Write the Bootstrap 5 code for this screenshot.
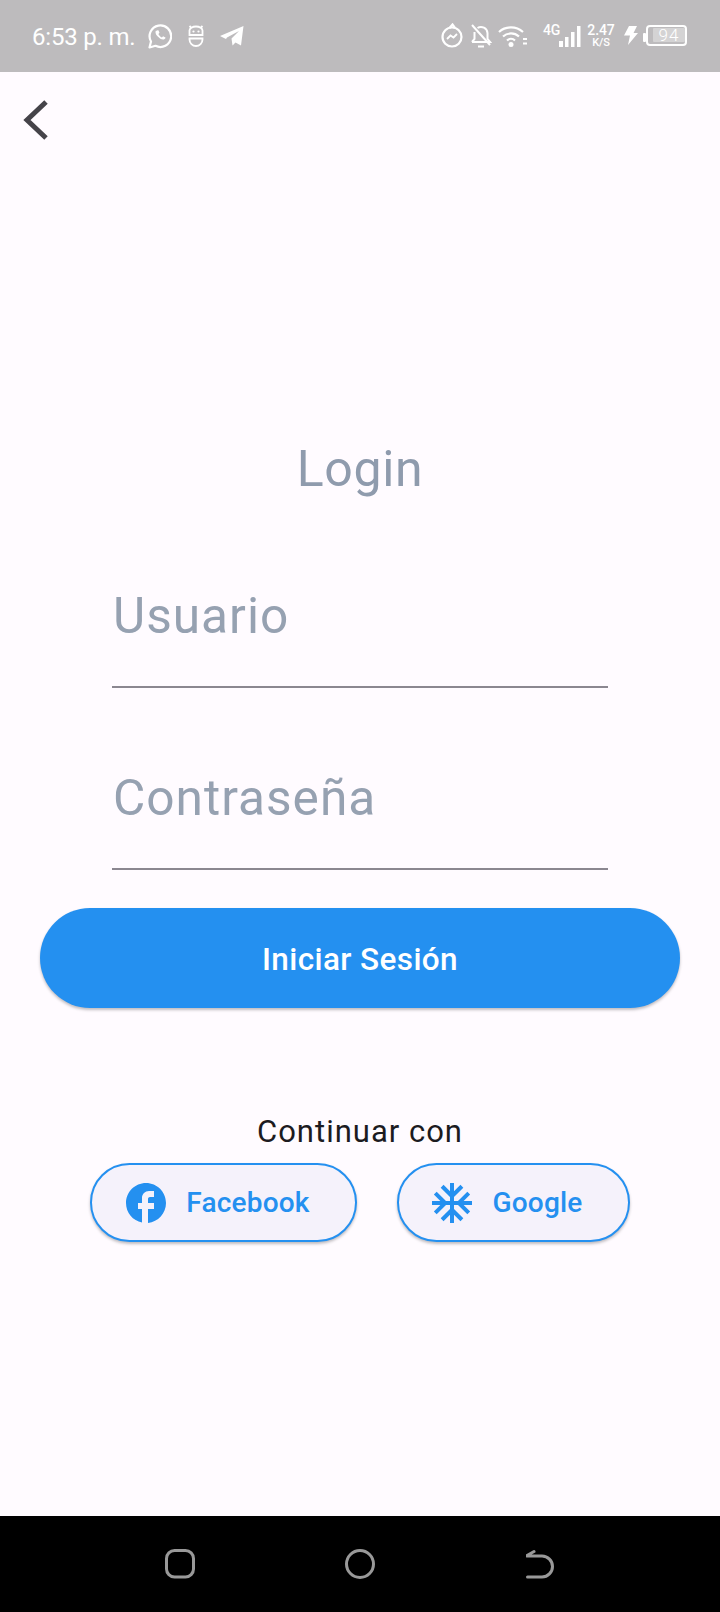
<!DOCTYPE html>
<html lang="es"><head><meta charset="utf-8"><title>Login</title>
<link href="https://cdn.jsdelivr.net/npm/bootstrap@5.3.0/dist/css/bootstrap.min.css" rel="stylesheet">
<style>
html,body{height:1612px;margin:0;overflow:hidden}
body{background:#fffbff;font-family:Roboto,sans-serif;display:flex;flex-direction:column}
.sbar{height:72px;background:#bdbbbd;color:#fff;padding:0 0 0 32px;flex:none}
.sbar svg{display:block;flex:none}
.stime{font-size:24px;line-height:28px;width:116px;white-space:nowrap;letter-spacing:-.2px;padding-top:1px}
.net{font-size:14px;font-weight:500;line-height:14px;letter-spacing:-.3px;width:16px;margin:-13px 0 0 16px;white-space:nowrap}
.speed{font-weight:500;font-size:14px;line-height:14px;text-align:center;letter-spacing:-.1px;width:28px;margin:-2px 0 0 6px}
.speed span{display:block;font-size:11px;line-height:11px}
.batt{width:41px;height:21px;border:2px solid #fff;border-radius:4px;font-size:17px;font-weight:300;line-height:14px;text-align:center;padding:1px 0 1px 5px;margin-top:-1px}
.batt span{display:block;background:#d4d3d4;border-radius:1px;letter-spacing:1px;color:#fff}
.appbar{height:96px;flex:none;padding:27px 0 0 21px}
.mainarea{flex:1 1 auto;display:flex;flex-direction:column;align-items:center;min-height:0}
.ttl{font-size:50px;line-height:56px;margin:273px 0 0;color:#8f9bad;letter-spacing:.6px;font-weight:400}
.fld{width:496px;border-bottom:2px solid #8b8790;color:#96a1b1;font-size:49.600px;line-height:56px;letter-spacing:1px;padding-left:1px}
.fld1{margin-top:65px;height:126px;padding-top:26px}
.fld2{height:182px;padding-top:82px}
.mainbtn{width:640px;height:100px;margin-top:38px;padding-top:9px;border:0;border-radius:50px;background:#2490f0;color:#fff;font-size:31.500px;font-weight:500;letter-spacing:.4px;box-shadow:0 2px 3px rgba(0,0,0,.25)}
.cont{font-size:31px;line-height:36px;margin-top:106px;color:#1c1b1f;letter-spacing:1px}
.socials{gap:40px;margin-top:13px}
.sbtn{height:79px;border:2px solid #2490f0;border-radius:40px;background:#f5f2fb;color:#2490f0;font-size:28px;font-weight:500;box-shadow:0 2px 3px rgba(0,0,0,.25);gap:20px;letter-spacing:.2px}
.sfb{width:267px;padding:0 11px 0 0}
.sgo{width:233px;padding:0 12px 0 0}
.navb{height:96px;background:#000;flex:none;padding-left:165px}
.navb svg{display:block;flex:none}
</style></head>
<body>
<header class="sbar d-flex align-items-center">
  <div class="d-flex align-items-center">
    <span class="stime">6:53 p. m.</span>
    <svg width="24" height="26" viewBox="0 0 24 26" fill="none" stroke="#fff" stroke-width="2.200"><path d="M1.500 24.500l1.500-6A10.800 10.800 0 1 1 7.500 22.800z" stroke-linejoin="round"/><path d="M8 7.500c-1 1.500-.6 3.500 1.500 5.800S14 17 15.800 16.500c1.200-.4 2-1.500 1.600-2l-2.300-1.200-1.200 1.200c-1.300-.5-3-2.200-3.500-3.500l1.100-1.200-1-2.400c-.5-.4-1.800 0-2.500.6z" fill="#fff" stroke="none"/></svg>
    <svg width="18" height="22" viewBox="0 0 18 22" fill="none" stroke="#fff" stroke-width="1.800" style="margin-left:15px"><path d="M2.500 10V5.500a6.500 4 0 0 1 13 0V10zM2.500 1l2 2M15.500 1l-2 2M2.500 13.500h13v1a6.500 6.500 0 0 1-13 0z"/><circle cx="6.500" cy="6.500" r="1.100" fill="#fff" stroke="none"/><circle cx="11.500" cy="6.500" r="1.100" fill="#fff" stroke="none"/></svg>
    <svg width="24" height="20" viewBox="0 0 24 20" fill="#fff" style="margin-left:15px"><path d="M0 10 23.500 0 21 19.500l-5.500-3-3 3-1-7L19 5 7 11.500 6 13z"/></svg>
  </div>
  <div class="d-flex align-items-center ms-auto" style="margin-right:33px">
    <svg width="24" height="26" viewBox="0 0 24 26" fill="none" stroke="#fff" stroke-width="2.200"><circle cx="12" cy="14" r="9.500"/><path d="M9.500 5 12.500 1.500 15 5"/><path d="M7 16l3.500-3.500 3 2 3.500-3.500" stroke-width="1.800"/></svg>
    <svg width="22" height="24" viewBox="0 0 22 24" fill="none" stroke="#fff" stroke-width="2" style="margin-left:6px"><path d="M2 18h18l-2.500-3V9a6.500 6.500 0 0 0-10-5M4.500 8v7L2 18M8 22.500h6"/><path d="M2 1l18 20"/></svg>
    <svg width="28" height="24" viewBox="0 0 28 24" fill="none" stroke="#fff" stroke-width="2.200" style="margin-left:6px"><path d="M1 8a18 18 0 0 1 24 0M5 12.500a12 12 0 0 1 16 0M9 16.500a6 6 0 0 1 8 0"/><circle cx="13" cy="20.500" r="2.500" fill="#fff" stroke="none"/></svg>
    <svg width="4" height="7" viewBox="0 0 4 7" fill="#fff" style="margin:10px 0 0 -3px"><rect width="4" height="2"/><rect y="4.500" width="4" height="2"/></svg>
    <div class="net">4G</div>
    <svg width="22" height="21" viewBox="0 0 22 21" fill="#fff"><rect y="15" width="4" height="6"/><rect x="6" y="11" width="3.500" height="10"/><rect x="12" y="6" width="3.500" height="15"/><rect x="18" width="3.500" height="21"/></svg>
    <div class="speed">2.47<span>K/S</span></div>
    <svg width="14" height="19" viewBox="0 0 14 19" fill="#fff" style="margin:-2px 0 0 9px"><path d="M5 0h8L9.500 7H14L4 19l2-9.500H0z"/></svg>
    <svg width="3" height="9" viewBox="0 0 3 9" fill="#fff" style="margin:3px 0 0 5px"><rect width="3" height="9" rx="1"/></svg>
    <div class="batt"><span>94</span></div>
  </div>
</header>
<main class="mainarea">
  <div class="appbar align-self-start">
    <svg width="28" height="42" viewBox="0 0 28 42" fill="none" stroke="#454349" stroke-width="5"><path d="M25 3 6 21l19 18"/></svg>
  </div>
  <h1 class="ttl">Login</h1>
  <div class="fld fld1">Usuario</div>
  <div class="fld fld2">Contraseña</div>
  <button class="btn mainbtn" type="button">Iniciar Sesión</button>
  <div class="cont">Continuar con</div>
  <div class="d-flex socials">
    <button class="btn sbtn sfb d-flex align-items-center justify-content-center" type="button">
      <svg width="40" height="40" viewBox="2 2 20 20"><path fill="#2490f0" d="M22 12c0-5.520-4.480-10-10-10S2 6.480 2 12c0 4.840 3.440 8.870 8 9.800V15H8v-3h2V9.500C10 7.570 11.570 6 13.500 6H16v3h-2c-.55 0-1 .45-1 1v2h3v3h-3v6.950c5.050-.5 9-4.760 9-9.950z"/></svg>
      <span>Facebook</span>
    </button>
    <button class="btn sbtn sgo d-flex align-items-center justify-content-center" type="button">
      <svg width="40" height="40" viewBox="2 2 20 20"><path fill="#2490f0" d="M22 11h-4.170l3.240-3.240-1.410-1.420L15 11h-2V9l4.660-4.660-1.420-1.410L13 6.170V2h-2v4.170L7.760 2.930 6.340 4.340 11 9v2H9L4.340 6.340 2.930 7.760 6.170 11H2v2h4.170l-3.240 3.240 1.410 1.420L9 13h2v2l-4.660 4.660 1.420 1.410L11 17.830V22h2v-4.170l3.240 3.240 1.420-1.410L13 15v-2h2l4.660 4.660 1.410-1.420L17.830 13H22z"/></svg>
      <span>Google</span>
    </button>
  </div>
</main>
<footer class="navb d-flex align-items-center">
  <svg width="30" height="30" viewBox="0 0 30 30" fill="none" stroke="#999" stroke-width="3"><rect x="1.500" y="1.500" width="27" height="26.500" rx="8"/></svg>
  <svg width="30" height="30" viewBox="0 0 30 30" fill="none" stroke="#999" stroke-width="3" style="margin-left:150px"><circle cx="15" cy="15" r="13.500"/></svg>
  <svg width="28" height="30" viewBox="0 0 28 30" fill="none" stroke="#999" stroke-width="3" stroke-linecap="round" style="margin-left:151px"><path d="M1.500 28h14.500a10.500 10.500 0 0 0 0-21H1M1 6.500 8 2.500"/></svg>
</footer>
</body></html>
